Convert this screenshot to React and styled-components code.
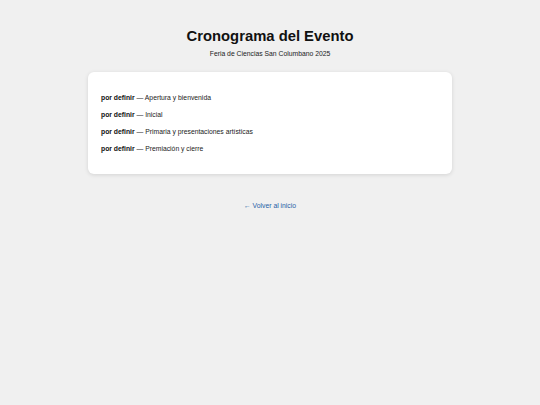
import React from "react";
import styled, { createGlobalStyle } from "styled-components";

const Global = createGlobalStyle`
  html, body { margin: 0; padding: 0; background: #f0f0f0; }
  body { font-family: "Liberation Sans", Arial, sans-serif; color: #111; }
`;

const Page = styled.div`
  display: flex;
  flex-direction: column;
  align-items: center;
  padding-top: 26px;
`;

const Header = styled.header`
  display: flex;
  flex-direction: column;
  align-items: center;
`;

const Title = styled.h1`
  margin: 0;
  font-size: 14.8px;
  line-height: 20px;
  font-weight: 700;
  color: #111;
`;

const Subtitle = styled.p`
  margin: 3px 0 0;
  font-size: 6.8px;
  line-height: 9px;
  color: #222;
`;

const Card = styled.section`
  box-sizing: border-box;
  width: 364px;
  margin-top: 14px;
  background: #fff;
  border-radius: 6px;
  box-shadow: 0 1px 4px rgba(0, 0, 0, 0.12);
  padding: 16.5px 13px 17.5px;
  display: flex;
  flex-direction: column;
`;

const Row = styled.div`
  font-size: 6.8px;
  line-height: 17px;
  color: #222;
`;

const Time = styled.strong`
  font-weight: 700;
  color: #111;
`;

const BackLink = styled.a`
  margin-top: 27px;
  font-size: 6.8px;
  line-height: 10px;
  color: #1f5fa6;
  text-decoration: none;
`;

const items = [
  "Apertura y bienvenida",
  "Inicial",
  "Primaria y presentaciones artísticas",
  "Premiación y cierre",
];

export default function App() {
  return (
    <>
      <Global />
      <Page>
        <Header>
          <Title>Cronograma del Evento</Title>
          <Subtitle>Feria de Ciencias San Columbano 2025</Subtitle>
        </Header>
        <Card>
          {items.map((t) => (
            <Row key={t}>
              <Time>por definir</Time> — {t}
            </Row>
          ))}
        </Card>
        <BackLink href="#">← Volver al inicio</BackLink>
      </Page>
    </>
  );
}
